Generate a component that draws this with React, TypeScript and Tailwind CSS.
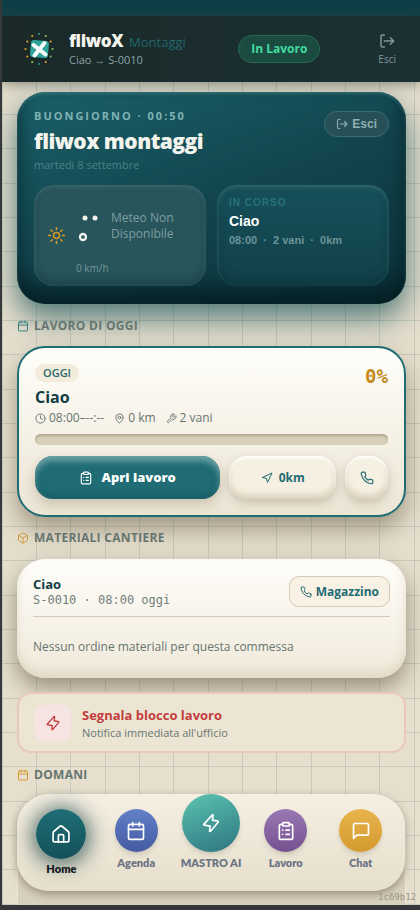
import type { CSSProperties, ReactNode } from "react";
import { LuBox, LuCalendar, LuClipboardList, LuClock, LuMapPin, LuWrench } from "react-icons/lu";
import { FiMessageSquare, FiNavigation, FiPhone } from "react-icons/fi";

const LOGO_DOTS = ["#2f8f96", "#8cc152", "#e0a030", "#8cc152", "#6fbf6a", "#e0a030", "#2f8f96", "#8cc152", "#e0a030", "#e0a030", "#e0a030", "#e0a030"];

function Logo() {
  return (
    <svg viewBox="0 0 36 36" className="size-9 shrink-0" aria-hidden="true">
      {LOGO_DOTS.map((fill, i) => {
        const a = ((i * 30 - 90) * Math.PI) / 180;
        return <circle key={i} cx={18 + Math.cos(a) * 13.5} cy={18 + Math.sin(a) * 15} r="1.1" fill={fill} />;
      })}
      <rect x="9.5" y="9.5" width="18" height="17" rx="3" fill="#2fa39a" transform="rotate(5 18 18)" />
      <path d="M12.5 14 24.5 23.5M23.5 12 13.5 24.5" stroke="#f6fbf9" strokeWidth="4" strokeLinecap="round" />
    </svg>
  );
}

function ExitIcon({ className }: { className?: string }) {
  return (
    <svg viewBox="0 0 24 24" fill="none" stroke="currentColor" strokeWidth="2.2" strokeLinecap="round" strokeLinejoin="round" className={className} aria-hidden="true">
      <path d="M8 3H5a2 2 0 0 0-2 2v14a2 2 0 0 0 2 2h3M8 12h14M17 7l5 5-5 5" />
    </svg>
  );
}

function BoltIcon({ className }: { className?: string }) {
  return (
    <svg viewBox="0 0 24 24" fill="none" stroke="currentColor" strokeWidth="2" strokeLinecap="round" strokeLinejoin="round" className={className} aria-hidden="true">
      <path d="M13.4 2.4 3.6 13.4c-.4.5-.2 1.1.4 1.2l7 1.2-.7 5.6c-.1.7.6 1 1.1.5L20.6 11c.4-.5.2-1.1-.4-1.2L13.7 8.6l.8-5.7c.1-.7-.6-1-1.1-.5z" />
    </svg>
  );
}

function HomeIcon({ className }: { className?: string }) {
  return (
    <svg viewBox="0 0 24 24" fill="none" stroke="currentColor" strokeWidth="2" strokeLinecap="round" strokeLinejoin="round" className={className} aria-hidden="true">
      <path d="M2.5 11c0-.8.3-1.500.9-2L10.700 2.700c.8-.6 1.800-.6 2.600 0L20.600 9c.6.5.9 1.200.9 2v8.500a2 2 0 0 1-2 2h-15a2 2 0 0 1-2-2z" />
      <path d="M8.800 21.500v-7.300c0-.8.6-1.400 1.400-1.400h3.600c.8 0 1.400.6 1.400 1.400v7.300" />
    </svg>
  );
}

function SunIcon({ className }: { className?: string }) {
  return (
    <svg viewBox="0 0 24 24" fill="none" stroke="currentColor" strokeWidth="2.2" strokeLinecap="round" className={className} aria-hidden="true">
      <circle cx="12" cy="12" r="4.2" />
      <path d="M12 1v2.5M12 20.5V23M1 12h2.5M20.5 12H23M4.200 4.200 6 6M18 18l1.800 1.800M19.800 4.200 18 6M6 18l-1.800 1.800" />
    </svg>
  );
}

function SectionTitle({ icon, children }: { icon: ReactNode; children: ReactNode }) {
  return (
    <h2 className="flex items-center gap-[5px] text-xs leading-4 font-bold tracking-wide text-[#66756f] uppercase">
      {icon}
      {children}
    </h2>
  );
}

const NAV = [
  { label: "Agenda", icon: <LuCalendar className="size-5" />, bg: "bg-linear-to-b from-[#6280c8] to-[#445ba3]" },
  { label: "MASTRO AI", icon: <BoltIcon className="size-5" />, bg: "bg-linear-160 from-[#5cc4b0] to-[#2e7580]", big: true },
  { label: "Lavoro", icon: <LuClipboardList className="size-5" />, bg: "bg-linear-to-b from-[#9a78b4] to-[#75528f]" },
  { label: "Chat", icon: <FiMessageSquare className="size-5" />, bg: "bg-linear-to-b from-[#e8b44c] to-[#d49a2e]" },
];

// three lines per 103px tile, the spacing alternates between 34 and 35
const GRID: CSSProperties = {
  backgroundImage: ["to right", "to bottom"]
    .map((d) => `linear-gradient(${d}, #6b8f8640 1px, transparent 1px 34px, #6b8f8640 34px 35px, transparent 35px 69px, #6b8f8640 69px 70px, transparent 70px)`)
    .join(","),
  backgroundSize: "103px 103px",
  backgroundPosition: "34px 32px",
};

export default function App() {
  return (
    <div className="relative flex h-screen flex-col overflow-hidden border-b-5 border-l-2 border-[#37383a] bg-[#e6dfce] font-['Open_Sans',sans-serif]">
      <div className="h-4 shrink-0 bg-[#0f3f47]" />
      <header className="relative flex h-[66px] shrink-0 items-center bg-linear-to-r from-[#1a2928] to-[#1b3134] pr-6 pl-[19px] shadow-[0_2px_12px_#3b453c90]">
        <Logo />
        <div className="ml-3 flex-1">
          <div className="flex items-baseline gap-1.5 leading-5">
            <span className="text-[17px] font-extrabold tracking-tight text-[#f4f4ee]">fliwoX</span>
            <span className="text-[13px] text-[#22676d]">Montaggi</span>
          </div>
          <p className="text-[11px] leading-4 text-[#8ba3a3]">Ciao → S-0010</p>
        </div>
        <span className="mr-[58px] rounded-full border border-[#286b54] bg-[#1a4a40] px-3 py-1 text-xs leading-[18px] font-bold text-[#45dca0]">In Lavoro</span>
        <button className="flex flex-col items-center gap-1 text-[10px] leading-3 text-[#83989a]">
          <ExitIcon className="size-4" />
          Esci
        </button>
      </header>

      <main className="flex flex-1 flex-col overflow-hidden px-[15px] pt-[10px] pr-[14px]" style={GRID}>
        <section className="h-[212px] shrink-0 rounded-[28px] bg-linear-160 from-[#1b6068] via-[#12454e] to-[#0b3239] px-[17px] pt-4 text-[#f4f4ee] shadow-[inset_0_2px_3px_#4a8a8c80,inset_0_-16px_20px_#041b20d0,0_14px_30px_#0e4a4fb0]">
          <div className="flex items-start justify-between">
            <div>
              <p className="text-[11px] leading-4 font-bold tracking-[2px] text-[#7fb3b3]">BUONGIORNO · 00:50</p>
              <h1 className="mt-[5px] text-[21px] leading-6 font-extrabold tracking-tight">fliwox montaggi</h1>
              <p className="mt-1 text-[11px] leading-4 text-[#4b8287]">martedì 8 settembre</p>
            </div>
            <button className="mt-[3px] flex h-[26px] items-center gap-1 rounded-full border border-[#3d6b72] bg-[#264f58] px-[11px] font-['Liberation_Sans',sans-serif] text-xs font-bold text-[#8fb0b2]">
              <ExitIcon className="size-3" />
              Esci
            </button>
          </div>
          <div className="mt-3 grid grid-cols-2 gap-[11px]">
            <div className="flex h-[101px] items-center rounded-[20px] bg-[#28545b] pl-[14px] shadow-[inset_0_2px_4px_#5c8b8e60,inset_0_-6px_8px_#12383f80,inset_1px_0_2px_#ffffff10]">
              <SunIcon className="size-[17px] shrink-0 text-[#d69a2c]" />
              <div className="ml-[11px] flex h-[76px] flex-1 flex-col justify-between pt-3">
                <div className="flex gap-[11px]">
                  <svg viewBox="0 0 24 32" className="h-8 w-6" role="img" aria-label="--°">
                    <circle cx="9" cy="8" r="2.5" fill="#f4f4ee" />
                    <circle cx="19" cy="8" r="2.5" fill="#f4f4ee" />
                    <circle cx="7" cy="27" r="3" fill="none" stroke="#f4f4ee" strokeWidth="2.3" />
                  </svg>
                  <p className="text-xs leading-4 text-[#7c9ea1]">Meteo Non<br />Disponibile</p>
                </div>
                <p className="text-[10px] leading-3 text-[#739699]">0 km/h</p>
              </div>
            </div>
            <div className="h-[101px] rounded-[20px] bg-linear-to-b from-[#164f59] to-[#11414a] px-3 pt-2.5 font-['Liberation_Sans',sans-serif] shadow-[inset_0_2px_4px_#5c8b8e70,inset_0_-6px_8px_#0b2f3780,inset_1px_0_2px_#ffffff10]">
              <p className="text-[10px] leading-4 font-bold tracking-[1px] text-[#24737a]">IN CORSO</p>
              <p className="text-sm leading-5 font-bold text-white">Ciao</p>
              <p className="text-[11px] leading-[18px] font-bold whitespace-pre text-[#6b9599]">08:00  ·  2 vani  ·  0km</p>
            </div>
          </div>
        </section>

        <div className="mt-3.5">
          <SectionTitle icon={<LuCalendar className="size-3 text-[#3b8287]" />}>Lavoro di oggi</SectionTitle>
        </div>
        <section className="mt-3 h-[171px] shrink-0 rounded-[28px] border-2 border-[#1f6c73] bg-linear-to-b from-[#fffefa] to-[#ece5d4] px-4 pt-4 shadow-[0_12px_24px_#5c503880]">
          <div className="flex h-[22px] items-start justify-between">
            <span className="rounded-full bg-[#f3ecdc] px-2 text-[11px] leading-[18px] font-semibold text-[#2a6a70]">OGGI</span>
            <span className="font-['DejaVu_Sans_Mono',monospace] text-[19px] leading-6 font-bold text-[#c48a1c]">0%</span>
          </div>
          <h3 className="mt-px text-base leading-5 font-bold text-[#123c42]">Ciao</h3>
          <div className="mt-[3px] flex h-4 items-center gap-2.5 text-xs text-[#66756f]">
            <span className="flex items-center gap-[3px]"><LuClock className="size-[11px]" />08:00–--:--</span>
            <span className="flex items-center gap-[3px]"><LuMapPin className="size-[11px]" />0 km</span>
            <span className="flex items-center gap-[3px]"><LuWrench className="size-[11px]" />2 vani</span>
          </div>
          <div className="mt-2 h-[11px] rounded-full bg-[#d9d0bb] shadow-[inset_0_2px_3px_#b0a58c]" />
          <div className="mt-[11px] flex gap-[9px]">
            <button className="flex h-[43px] flex-[186] items-center justify-center gap-2 rounded-[18px] bg-[#1f6c75] text-[13px] font-extrabold text-white shadow-[inset_0_5px_6px_#9cc4c4a0,inset_0_-4px_6px_#11505880,0_5px_12px_#5c503840]">
              <LuClipboardList className="size-3.5" />
              Apri lavoro
            </button>
            <button className="flex h-[43px] flex-[107] items-center justify-center gap-1.5 rounded-[18px] bg-[#f6f0e2] text-xs font-bold text-[#1f6c73] shadow-[inset_0_2px_3px_#fff,inset_0_-4px_6px_#d9cfb8,0_4px_10px_#5c503840]">
              <FiNavigation className="size-3" />
              0km
            </button>
            <button aria-label="Chiama" className="flex size-[43px] items-center justify-center rounded-[18px] bg-[#f6f0e2] text-[#1f6c73] shadow-[inset_0_2px_3px_#fff,inset_0_-4px_6px_#d9cfb8,0_4px_10px_#5c503840]">
              <FiPhone className="size-3.5" />
            </button>
          </div>
        </section>

        <div className="mt-[13px]">
          <SectionTitle icon={<LuBox className="size-3 text-[#cf9a38]" />}>Materiali cantiere</SectionTitle>
        </div>
        <section className="mt-[13px] h-[119px] shrink-0 rounded-[28px] bg-linear-to-b from-[#fffefb] to-[#f0e9da] px-4 pt-[17px] shadow-[inset_0_-6px_10px_#d9cfb8a0,0_10px_22px_#5c503890]">
          <div className="flex items-start justify-between border-b border-[#d3cab6] pb-2">
            <div>
              <h3 className="text-[13px] leading-4 font-bold text-[#123c42]">Ciao</h3>
              <p className="font-['DejaVu_Sans_Mono',monospace] text-xs leading-4 text-[#71807b]">S-0010 · 08:00 oggi</p>
            </div>
            <button className="flex h-[31px] items-center gap-1 rounded-[10px] border border-[#d3cab6] bg-[#f8f1e4] px-2.5 text-xs font-bold text-[#1f6c73]">
              <FiPhone className="size-3" />
              Magazzino
            </button>
          </div>
          <p className="mt-5 text-xs leading-5 text-[#66756f]">Nessun ordine materiali per questa commessa</p>
        </section>

        <button className="relative mt-3.5 flex h-[61px] shrink-0 items-center gap-[11px] rounded-[14px] border-2 border-[#e8c8b8] bg-[#ece5d4] px-4 text-left">
          <span className="flex size-9 items-center justify-center rounded-lg bg-[#f5e4e1] text-[#c23b3b]">
            <BoltIcon className="size-4" />
          </span>
          <span>
            <span className="block text-[13px] leading-5 font-bold text-[#c43d3d]">Segnala blocco lavoro</span>
            <span className="block text-[11px] leading-4 text-[#66756f]">Notifica immediata all'ufficio</span>
          </span>
        </button>

        <div className="mt-3.5">
          <SectionTitle icon={<LuCalendar className="size-3 text-[#d69a2c]" />}>Domani</SectionTitle>
        </div>
        <section className="mt-4 h-40 shrink-0 rounded-[28px] border border-[#efe8d8] bg-[#d8d0be]" />
      </main>

      <nav className="absolute inset-x-[15px] bottom-[14px] grid h-[97px] grid-cols-5 rounded-[32px] bg-linear-to-b from-[#f5efe2] to-[#e6dfcc] px-[7px] font-['Lato',sans-serif] shadow-[0_3px_8px_#5c503880]">
        <a href="#home" className="flex flex-col items-center pt-[15px] text-[11px] leading-4 font-extrabold text-[#14181f]">
          <span className="mb-0.5 flex size-[50px] items-center justify-center rounded-full bg-linear-to-b from-[#1e6f76] to-[#155059] text-white shadow-[0_2px_20px_4px_#0e3a3fb0]">
            <HomeIcon className="size-5" />
          </span>
          Home
        </a>
        {NAV.map(({ label, icon, bg, big }) => (
          <a key={label} href="#" className={`flex flex-col items-center text-[11px] leading-4 font-extrabold whitespace-nowrap text-[#6d7484] ${big ? "" : "pt-[15px]"}`}>
            <span className={`mb-[3px] flex items-center justify-center rounded-full text-white shadow-md ${big ? "size-[58px]" : "size-[43px]"} ${bg}`}>
              {icon}
            </span>
            {label}
          </a>
        ))}
      </nav>
      <span className="absolute right-1 bottom-0.5 font-['DejaVu_Sans_Mono',monospace] text-[9px] leading-3 text-[#9b9686]">1c69b12</span>
    </div>
  );
}
